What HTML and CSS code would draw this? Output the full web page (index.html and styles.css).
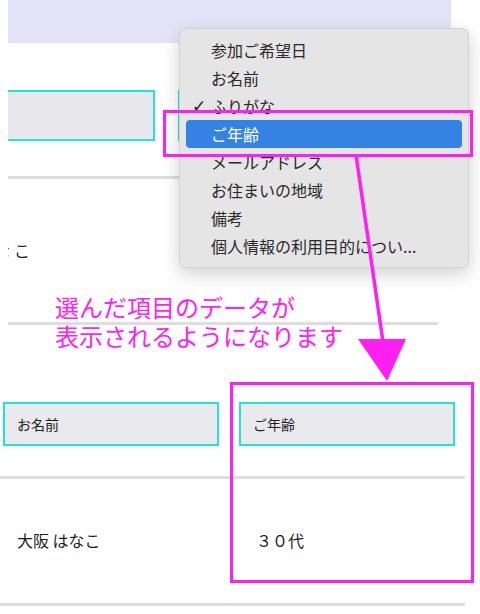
FILE: index.html
```html
<!DOCTYPE html>
<html lang="ja">
<head>
<meta charset="utf-8">
<title>項目選択</title>
<link rel="stylesheet" href="styles.css">
</head>
<body>
<div class="page">
  <div class="banner"></div>
  <div class="fields">
    <div class="field field-a"></div>
    <div class="field field-b"></div>
  </div>
  <div class="rule rule-a"></div>
  <div class="name-frag">なこ</div>
  <div class="rule rule-b"></div>
  <div class="thead">
    <div class="th">お名前</div>
    <div class="th">ご年齢</div>
  </div>
  <div class="rule rule-c"></div>
  <div class="trow">
    <div class="td">大阪 はなこ</div>
    <div class="td td-age">３０代</div>
  </div>
  <div class="rule rule-d"></div>

  <ul class="menu">
    <li class="item">参加ご希望日</li>
    <li class="item">お名前</li>
    <li class="item checked"><span class="check">✓</span>ふりがな</li>
    <li class="item selected">ご年齢</li>
    <li class="item">メールアドレス</li>
    <li class="item">お住まいの地域</li>
    <li class="item">備考</li>
    <li class="item">個人情報の利用目的につい...</li>
  </ul>

  <div class="hl hl-menu"></div>
  <div class="hl hl-col"></div>
  <svg class="arrow" width="480" height="614" viewBox="0 0 480 614">
    <line x1="356" y1="155" x2="383" y2="342" stroke="#ff1ff0" stroke-width="3.5"/>
    <polygon points="358,339 406,339 387,381" fill="#ff1ff0"/>
  </svg>
  <div class="note">選んだ項目のデータが<br>表示されるようになります</div>
</div>
</body>
</html>
```

FILE: styles.css
```css
html, body {
  margin: 0;
  padding: 0;
  background: #ffffff;
}
body {
  font-family: "Noto Sans CJK JP", "Noto Sans", sans-serif;
  color: #1e1e1e;
  width: 480px;
  height: 614px;
  overflow: hidden;
}
.page {
  position: relative;
  width: 480px;
  height: 614px;
}
.banner {
  margin-left: 8px;
  width: 443px;
  height: 43px;
  background: #e5e3f7;
}
.fields {
  display: flex;
  margin-top: 47px;
  height: 51px;
}
.field {
  box-sizing: border-box;
  height: 51px;
  background: #e8e8ec;
  border: 2px solid #22e3d4;
}
.field-a {
  margin-left: 8px;
  width: 147px;
  border-left: none;
}
.field-b {
  margin-left: 23px;
  width: 220px;
}
.rule {
  height: 3px;
  background: #dedede;
}
.rule-a {
  margin-top: 35px;
  margin-left: 8px;
  width: 440px;
}
.name-frag {
  margin-top: 59px;
  margin-left: 8px;
  width: 100px;
  height: 24px;
  line-height: 24px;
  font-size: 16px;
  text-indent: -14px;
  letter-spacing: 4px;
  overflow: hidden;
  white-space: nowrap;
}
.rule-b {
  margin-top: 60px;
  margin-left: 8px;
  width: 430px;
}
.thead {
  display: flex;
  gap: 20px;
  margin-top: 77px;
  margin-left: 3px;
}
.th {
  box-sizing: border-box;
  width: 216px;
  height: 44px;
  border: 2px solid #22e3d4;
  background: #e9e9ee;
  padding-left: 12px;
  display: flex;
  align-items: center;
  font-size: 14px;
}
.rule-c {
  margin-top: 30px;
  width: 465px;
}
.trow {
  display: flex;
  margin-top: 49px;
  height: 24px;
  line-height: 24px;
  font-size: 16px;
}
.td {
  padding-left: 17px;
  width: 222px;
}
.td-age {
  padding-left: 17px;
}
.rule-d {
  margin-top: 51px;
  width: 465px;
}

.menu {
  position: absolute;
  left: 179px;
  top: 28px;
  box-sizing: border-box;
  width: 290px;
  height: 240px;
  margin: 0;
  padding: 7px 0 9px;
  list-style: none;
  background: #e5e5e5;
  border: 1px solid #d2d2d2;
  border-radius: 7px;
  box-shadow: 0 6px 18px rgba(0, 0, 0, 0.18);
}
.item {
  position: relative;
  height: 28px;
  line-height: 28px;
  margin: 0 6px;
  padding-left: 25px;
  font-size: 16px;
  color: #2a2a2a;
  border-radius: 4px;
  white-space: nowrap;
}
.item.selected {
  background: #3382e4;
  color: #ffffff;
}
.check {
  position: absolute;
  left: 6px;
  top: 0;
  font-family: "DejaVu Sans", sans-serif;
  font-size: 17px;
  font-weight: bold;
  color: #222;
}

.hl {
  position: absolute;
  box-sizing: border-box;
  border: 3px solid #ff1ff0;
}
.hl-menu {
  left: 163px;
  top: 110px;
  width: 310px;
  height: 47px;
}
.hl-col {
  left: 230px;
  top: 382px;
  width: 244px;
  height: 201px;
}
.arrow {
  position: absolute;
  left: 0;
  top: 0;
  pointer-events: none;
}
.note {
  position: absolute;
  left: 55px;
  top: 292px;
  font-size: 24px;
  line-height: 29px;
  color: #ff22ee;
  white-space: nowrap;
}
```
